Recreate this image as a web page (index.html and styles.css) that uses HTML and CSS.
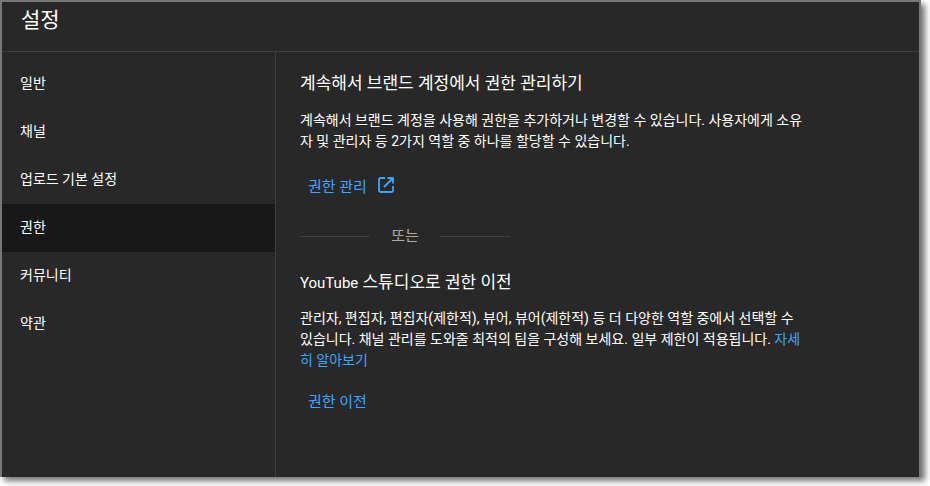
FILE: index.html
```html
<!DOCTYPE html>
<html lang="ko">
<head>
<meta charset="utf-8">
<title>설정</title>
<link rel="stylesheet" href="styles.css">
</head>
<body>
<div class="dialog">
  <header class="header"><h1 class="title">설정</h1></header>
  <div class="body">
    <nav class="nav">
      <div class="nav-item">일반</div>
      <div class="nav-item">채널</div>
      <div class="nav-item">업로드 기본 설정</div>
      <div class="nav-item active">권한</div>
      <div class="nav-item">커뮤니티</div>
      <div class="nav-item">약관</div>
    </nav>
    <main class="content">
      <h2 class="heading">계속해서 브랜드 계정에서 권한 관리하기</h2>
      <p class="text">계속해서 브랜드 계정을 사용해 권한을 추가하거나 변경할 수 있습니다. 사용자에게 소유자 및 관리자 등 2가지 역할 중 하나를 할당할 수 있습니다.</p>
      <a class="btn">권한 관리
        <svg class="icon" viewBox="0 0 16 16" width="16" height="16" fill="none" stroke="currentColor" stroke-width="1.8" stroke-linejoin="round"><path d="M7 1H2.500A1.500 1.500 0 0 0 1 2.500v11A1.500 1.500 0 0 0 2.500 15h11a1.500 1.500 0 0 0 1.500-1.500V9"/><path d="M9.500 1H15v5.500M15 1 6 10"/></svg>
      </a>
      <div class="divider"><span class="rule"></span><span class="or">또는</span><span class="rule"></span></div>
      <h2 class="heading second"><span class="latin">YouTube</span> 스튜디오로 권한 이전</h2>
      <p class="text">관리자, 편집자, 편집자(제한적), 뷰어, 뷰어(제한적) 등 더 다양한 역할 중에서 선택할 수 있습니다. 채널 관리를 도와줄 최적의 팀을 구성해 보세요. 일부 제한이 적용됩니다. <a class="link">자세히 알아보기</a></p>
      <a class="btn last">권한 이전</a>
    </main>
  </div>
</div>
</body>
</html>
```
FILE: styles.css
```css
html, body { margin: 0; height: 100%; background: #fff; }
body { font-family: Roboto, "Noto Sans CJK KR", sans-serif; overflow: hidden; }
.dialog {
  box-sizing: border-box;
  width: 921px;
  height: 477px;
  border: 2px solid #777;
  border-bottom: 0;
  background: #282828;
  color: #fff;
  display: flex;
  flex-direction: column;
  box-shadow: 4px 4px 6px rgba(0,0,0,.55);
}
.header { height: 49px; border-bottom: 1px solid #3e3e3e; flex: none; display: flex; align-items: flex-start; padding-left: 19px; }
.title { margin: 4px 0 0; font-size: 21px; line-height: 28px; font-weight: 400; }
.body { flex: 1; display: flex; min-height: 0; }
.nav { box-sizing: border-box; width: 274px; flex: none; border-right: 1px solid #3e3e3e; padding-top: 8px; }
.nav-item { height: 48px; line-height: 46px; padding-left: 18px; font-size: 14px; }
.active { background: #181818; }
.content { flex: 1; padding: 19px 0 0 24px; }
.heading { margin: 0; font-size: 17px; line-height: 24px; font-weight: 400; }
.latin { font-size: 15px; font-weight: 400; }
.second { margin-top: 22px; }
.text { margin: 15px 0 0; width: 506px; font-size: 14px; line-height: 21px; word-break: break-all; }
.second + .text { margin-top: 13px; }
.btn { display: flex; align-items: center; gap: 11px; height: 36px; margin: 15px 0 0 8px; font-size: 15px; color: #3ea6ff; }
.last { margin-top: 11px; }
.icon { display: block; }
.link { color: #3ea6ff; }
.divider { display: flex; align-items: center; width: 210px; margin-top: 21px; height: 24px; }
.rule { flex: 1; height: 1px; background: #3e3e3e; }
.or { width: 70px; padding-bottom: 4px; text-align: center; font-size: 15px; color: #aaa; }
```
